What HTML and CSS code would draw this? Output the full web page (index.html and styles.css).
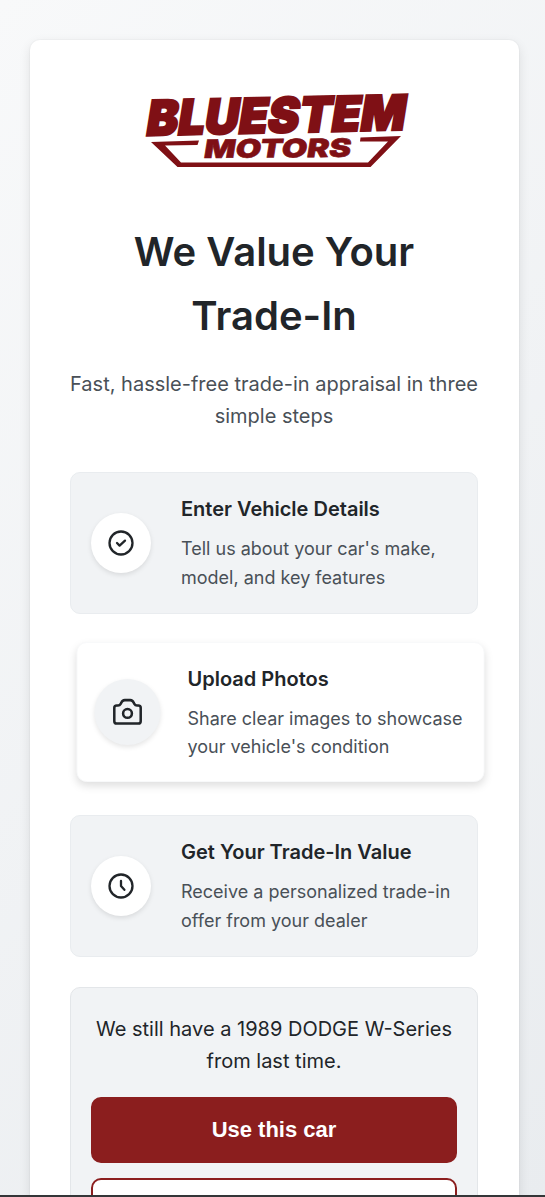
FILE: index.html
```html
<!DOCTYPE html>
<html lang="en">
<head>
<meta charset="utf-8">
<title>Bluestem Motors Trade-In</title>
<link rel="stylesheet" href="styles.css">
</head>
<body>
<main class="sheet">
  <svg class="logo" viewBox="0 -20 280 110" role="img" aria-label="Bluestem Motors">
    <g class="logo-text">
      <text class="logo-name" transform="matrix(1 -0.022 -0.16 1 1.800 44.500)" x="0" y="0" textLength="259" lengthAdjust="spacingAndGlyphs">BLUESTEM</text>
      <text class="logo-sub" transform="matrix(1 -0.008 -0.16 1 60 67)" x="0" y="0" textLength="147" lengthAdjust="spacingAndGlyphs">MOTORS</text>
    </g>
    <path class="logo-frame" d="M56 49.500 8 51 34.500 76H227.500L258 45 217.500 46.500 217 50.500H245L225 71.500H38L22 54.500 54.500 54Z"/>
  </svg>
  <h1 class="title">We Value Your Trade-In</h1>
  <p class="lead">Fast, hassle-free trade-in appraisal in three simple steps</p>
  <section class="steps">
    <article class="step">
      <div class="bubble"><svg class="icon" viewBox="0 0 28 28"><circle cx="14" cy="14" r="11.500"/><path d="m10 14 2.600 2.600L18 11.600"/></svg></div>
      <div class="copy"><h3>Enter Vehicle Details</h3><p>Tell us about your car's make, model, and key features</p></div>
    </article>
    <article class="step active">
      <div class="bubble"><svg class="icon" viewBox="0 0 28 28"><path d="M2 22.300V10.200Q2 8 4.200 8H5.400Q7 8 7.800 6.600L8.300 5.700Q9.300 3.200 11.500 3.200H16.500Q18.700 3.200 19.700 5.700L20.200 6.600Q21 8 22.600 8H23.800Q26 8 26 10.200V22.300Q26 24.500 23.800 24.500H4.200Q2 24.500 2 22.300Z"/><circle cx="14" cy="15.300" r="4"/></svg></div>
      <div class="copy"><h3>Upload Photos</h3><p>Share clear images to showcase your vehicle's condition</p></div>
    </article>
    <article class="step">
      <div class="bubble"><svg class="icon" viewBox="0 0 28 28"><circle cx="14" cy="14" r="11.500"/><path d="M14 9V14L17.400 17.800"/></svg></div>
      <div class="copy"><h3>Get Your Trade-In Value</h3><p>Receive a personalized trade-in offer from your dealer</p></div>
    </article>
  </section>
  <section class="resume">
    <p>We still have a 1989 DODGE W-Series from last time.</p>
    <button class="btn primary">Use this car</button>
    <button class="btn outline"></button>
  </section>
</main>
<div class="edge"></div>
</body>
</html>
```
FILE: styles.css
```css
* { box-sizing: border-box; }
html { height: 100%; overflow: hidden; }
body {
  margin: 0;
  height: 1197px;
  overflow: hidden;
  padding: 40px 26.500px 0 29.500px;
  background: linear-gradient(135deg, #f8f9fa 0%, #e9ecef 100%);
  font-family: Inter, "Liberation Sans", sans-serif;
  line-height: 1.6;
  color: #212529;
}
h1, h3, p { margin: 0; }
.sheet {
  height: 1157px;
  overflow: hidden;
  padding: 31px 40.500px 0;
  background: #fff;
  border-radius: 10px 10px 0 0;
  box-shadow: 0 0 0 1px rgba(0, 0, 0, .02), 0 4px 12px rgba(0, 0, 0, .1);
}
.logo { display: block; width: 280px; height: 110px; margin-left: 73px; overflow: visible; }
.logo-text { fill: #7f1015; stroke: #7f1015; font-family: Inter, sans-serif; font-weight: 900; }
.logo-name { font-size: 48.500px; stroke-width: 2.4px; }
.logo-sub { font-size: 25.500px; stroke-width: .6px; }
.logo-frame { fill: #7f1015; }
.title { margin-top: 39px; font-size: 40px; font-weight: 600; line-height: 64px; text-align: center; }
.lead { margin-top: 20px; font-size: 20px; line-height: 32px; text-align: center; color: #495057; }
.steps { display: grid; gap: 30px; margin-top: 40px; }
.step {
  display: flex;
  align-items: center;
  gap: 30px;
  height: 142px;
  padding: 0 20px;
  background: #f1f3f5;
  border: 1px solid #e9ecef;
  border-radius: 10px;
}
.step.active {
  height: 140px;
  margin-bottom: 1px;
  background: #fff;
  border-color: #f8f9fa;
  box-shadow: 0 4px 9px rgba(0, 0, 0, .13);
  transform: translate(6.500px, -2px);
}
.bubble {
  display: flex;
  align-items: center;
  justify-content: center;
  flex: none;
  width: 60px;
  height: 60px;
  border-radius: 50%;
  background: #fff;
  box-shadow: 0 2px 5px rgba(0, 0, 0, .1);
}
.active .bubble { background: #f1f3f5; transform: scale(1.1); }
.icon { width: 28px; height: 28px; fill: none; stroke: #212529; stroke-width: 2.3; stroke-linecap: round; stroke-linejoin: round; }
.copy h3 { margin-bottom: 10px; font-size: 20px; font-weight: 600; line-height: 32px; }
.copy p { font-size: 18px; line-height: 28.800px; color: #495057; }
.active .copy p { line-height: 28.200px; }
.resume {
  display: flex;
  flex-direction: column;
  margin-top: 30px;
  height: 400px;
  padding: 25px 20px;
  background: #f1f3f5;
  border: 1px solid #e3e6e9;
  border-radius: 10px;
}
.resume p { margin-bottom: 20px; font-size: 20px; line-height: 32px; text-align: center; }
.btn { height: 66px; flex: none; border: 2px solid #8b1e1e; border-radius: 10px; font: bold 22px "Liberation Sans", Arial, sans-serif; }
.primary { background: #8b1e1e; color: #fff; }
.outline { margin-top: 15px; background: #fff; }
.edge { position: fixed; left: 0; right: 0; bottom: 0; height: 2px; background: #343638; }
```
